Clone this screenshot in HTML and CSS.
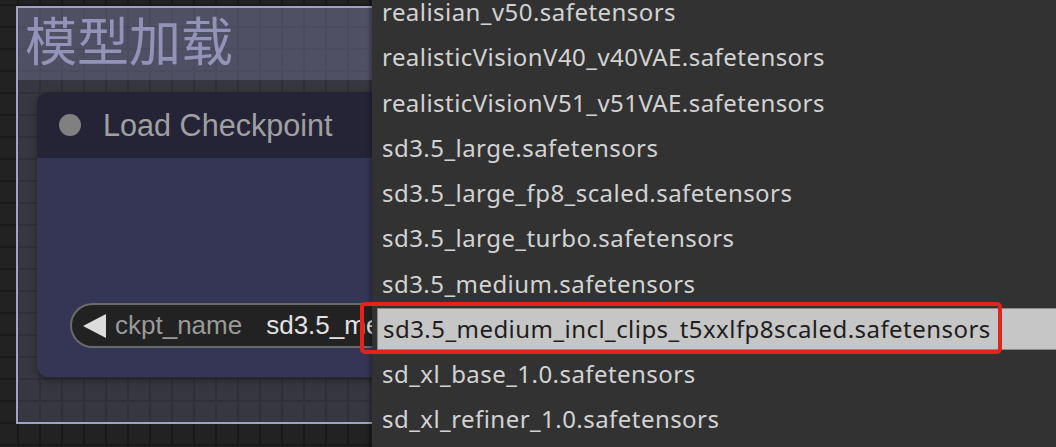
FILE: index.html
```html
<!DOCTYPE html>
<html lang="zh">
<head>
  <meta charset="UTF-8">
  <title>Load Checkpoint</title>
  <link rel="stylesheet" href="styles.css">
</head>
<body>
  <div class="canvas">
    <div class="group">
      <div class="group-title">模型加载</div>
      <div class="node">
        <div class="node-title">
          <span class="node-dot"></span>
          <span class="node-name">Load Checkpoint</span>
        </div>
        <div class="node-body">
          <div class="combo">
            <span class="combo-arrow"></span>
            <span class="combo-label">ckpt_name</span>
            <span class="combo-value">sd3.5_medium_incl_clips_t5xxlfp8scaled.safetensors</span>
          </div>
        </div>
      </div>
    </div>

    <ul class="menu">
      <li class="menu-item">realisian_v50.safetensors</li>
      <li class="menu-item">realisticVisionV40_v40VAE.safetensors</li>
      <li class="menu-item">realisticVisionV51_v51VAE.safetensors</li>
      <li class="menu-item">sd3.5_large.safetensors</li>
      <li class="menu-item">sd3.5_large_fp8_scaled.safetensors</li>
      <li class="menu-item">sd3.5_large_turbo.safetensors</li>
      <li class="menu-item">sd3.5_medium.safetensors</li>
      <li class="menu-item selected">sd3.5_medium_incl_clips_t5xxlfp8scaled.safetensors</li>
      <li class="menu-item">sd_xl_base_1.0.safetensors</li>
      <li class="menu-item">sd_xl_refiner_1.0.safetensors</li>
    </ul>

    <div class="highlight-box"></div>
  </div>
</body>
</html>
```

FILE: styles.css
```css
html, body {
  margin: 0;
  height: 100%;
  overflow: hidden;
}
body {
  background-color: #222;
  font-family: "Liberation Sans", Arial, sans-serif;
}
.canvas {
  position: relative;
  width: 1056px;
  height: 447px;
  overflow: hidden;
  background-color: #222;
  background-image:
    linear-gradient(to right, #191919 2px, transparent 2px),
    linear-gradient(to bottom, #191919 2px, transparent 2px);
  background-size: 22px 22px;
  background-position: 17px 4px;
}

/* group frame on the graph canvas */
.group {
  position: absolute;
  left: 16px;
  top: 6px;
  width: 1100px;
  height: 414px;
  border: 2px solid #a2a2c6;
  background: rgba(120, 120, 150, 0.25);
}
.group-title {
  height: 72px;
  padding-left: 7px;
  background: rgba(130, 130, 170, 0.35);
  color: #9393b9;
  font-family: "Noto Sans CJK SC", "Noto Sans", sans-serif;
  font-size: 52px;
  line-height: 62px;
}

/* node */
.node {
  position: absolute;
  left: 19px;
  top: 84px;
  width: 700px;
  height: 285px;
  border-radius: 12px;
  overflow: hidden;
  display: flex;
  flex-direction: column;
  box-shadow: 0 3px 8px rgba(0, 0, 0, 0.35);
}
.node-title {
  height: 66px;
  flex: none;
  display: flex;
  align-items: center;
  background: #252437;
  padding-left: 22px;
}
.node-dot {
  width: 22px;
  height: 22px;
  border-radius: 50%;
  background: #808080;
  margin-right: 22px;
}
.node-name {
  color: #a0a0a0;
  font-size: 30.6px;
}
.node-body {
  flex: 1;
  background: #353556;
  display: flex;
  align-items: flex-end;
  padding: 0 0 29px 33px;
}
.combo {
  height: 41px;
  width: 800px;
  border: 2px solid #6a6a6a;
  border-radius: 23px;
  background: #222;
  display: flex;
  align-items: center;
  padding-left: 11px;
  white-space: nowrap;
  font-size: 26px;
}
.combo-arrow {
  width: 0;
  height: 0;
  border-top: 12px solid transparent;
  border-bottom: 12px solid transparent;
  border-right: 23px solid #dcdcdc;
  margin-right: 9px;
}
.combo-label {
  color: #9a9a9a;
  margin-right: 24px;
}
.combo-value {
  color: #e2e2e2;
}

/* dropdown list */
.menu {
  position: absolute;
  left: 372px;
  top: -11px;
  width: 700px;
  height: 480px;
  margin: 0;
  padding: 0 0 0 5px;
  list-style: none;
  background: #323232;
  box-shadow: -2px 0 4px rgba(0, 0, 0, 0.3);
  font-family: "Noto Sans", sans-serif;
  font-size: 24px;
  letter-spacing: 0.45px;
}
.menu-item {
  height: 45.3px;
  line-height: 45.3px;
  padding-left: 5px;
  color: #d2d2d2;
  white-space: nowrap;
  box-sizing: border-box;
}
.menu-item.selected {
  background: #c6c6c6;
  color: #1e1e1e;
  border: 1px solid #8a8a8a;
  height: 42px;
  line-height: 40px;
  margin: 2px 0 1px;
}

/* annotation frame */
.highlight-box {
  position: absolute;
  left: 360px;
  top: 302px;
  width: 634px;
  height: 44px;
  border: 4px solid #e5231d;
  border-radius: 5px;
}
```
